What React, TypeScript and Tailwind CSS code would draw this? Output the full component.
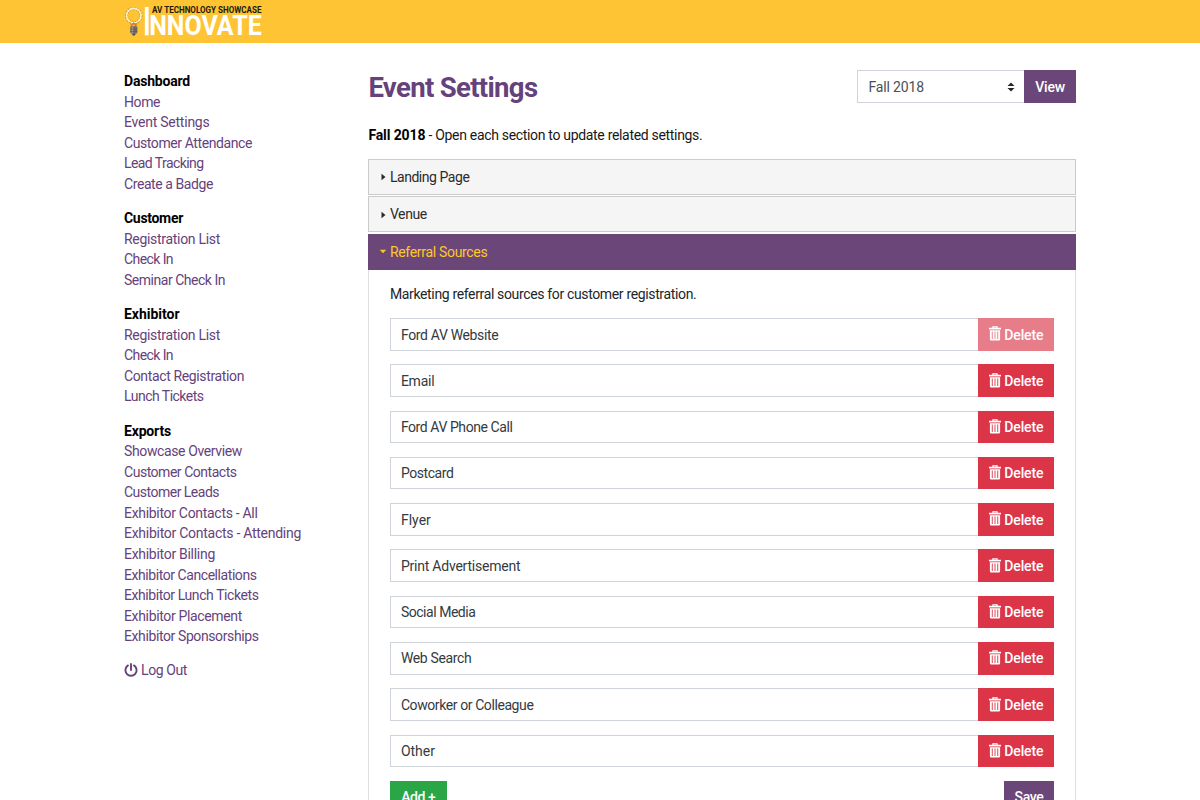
import { useLayoutEffect, useRef } from 'react';

type TextProps = { text: string; width: number; className?: string };

/** Single-line text whose tracking is adjusted so that it fills `width` pixels. */
function Text({ text, width, className = '' }: TextProps) {
  const ref = useRef<HTMLSpanElement>(null);
  useLayoutEffect(() => {
    const el = ref.current;
    if (!el) return;
    el.style.letterSpacing = '0px';
    const natural = el.getBoundingClientRect().width;
    el.style.letterSpacing = `${(width - natural) / text.length}px`;
  }, [text, width]);
  return (
    <span ref={ref} className={`inline-block whitespace-pre ${className}`}>
      {text}
    </span>
  );
}

const menu: { title: [string, number]; items: [string, number][] }[] = [
  {
    title: ['Dashboard', 66],
    items: [['Home', 36], ['Event Settings', 85.5], ['Customer Attendance', 128], ['Lead Tracking', 79.5], ['Create a Badge', 89]],
  },
  {
    title: ['Customer', 59],
    items: [['Registration List', 96], ['Check In', 49], ['Seminar Check In', 101]],
  },
  {
    title: ['Exhibitor', 55.5],
    items: [['Registration List', 96], ['Check In', 49], ['Contact Registration', 120], ['Lunch Tickets', 79.5]],
  },
  {
    title: ['Exports', 47],
    items: [
      ['Showcase Overview', 118],
      ['Customer Contacts', 112.5],
      ['Customer Leads', 95],
      ['Exhibitor Contacts - All', 133.5],
      ['Exhibitor Contacts - Attending', 177],
      ['Exhibitor Billing', 91],
      ['Exhibitor Cancellations', 132.5],
      ['Exhibitor Lunch Tickets', 134.5],
      ['Exhibitor Placement', 118],
      ['Exhibitor Sponsorships', 134.5],
    ],
  },
];

const sources: [string, number][] = [
  ['Ford AV Website', 97.5],
  ['Email', 33.5],
  ['Ford AV Phone Call', 111.5],
  ['Postcard', 52.5],
  ['Flyer', 30],
  ['Print Advertisement', 119.5],
  ['Social Media', 74.5],
  ['Web Search', 70.5],
  ['Coworker or Colleague', 132.5],
  ['Other', 34],
];

function Logo() {
  return (
    <svg width="140" height="42" viewBox="0 0 140 42" className="block" fontFamily="Roboto, sans-serif">
      <circle cx="9.8" cy="15.6" r="7.2" fill="none" stroke="#b98b2c" strokeWidth="2.8" strokeDasharray="1.6 1.2" />
      <circle cx="9.8" cy="15.6" r="7.2" fill="none" stroke="#fff3cf" strokeWidth="1.6" />
      <path d="M6.3 22.3 7.6 27h4.4l1.3-4.7" fill="none" stroke="#c99a38" strokeWidth="1" />
      <path d="m8.4 27-.6-2.3 1.9-1.5 1.9 1.5-.6 2.3" fill="none" stroke="#e4702a" strokeWidth="1.3" />
      <rect x="6.3" y="26.3" width="7" height="7.2" rx="1" fill="#726d66" />
      <path d="M8.4 26.8v6" stroke="#aaa49a" strokeWidth="1.4" />
      <path d="M6 29h7.5M6 31.4h7.5" stroke="#575149" strokeWidth="0.6" />
      <path d="M7.8 33.5h4l-1 2H8.8z" fill="#4c4941" />
      <rect x="20.8" y="7" width="3.8" height="28.3" fill="#fff" />
      <text x="28" y="13.4" fontSize="8.2" fontWeight="700" fill="#211b10" textLength="109.5" lengthAdjust="spacingAndGlyphs">AV TECHNOLOGY SHOWCASE</text>
      <text x="25.2" y="35.3" fontSize="27" fontWeight="700" fill="#fff" textLength="112.5" lengthAdjust="spacingAndGlyphs">NNOVATE</text>
    </svg>
  );
}

function Trash() {
  return (
    <svg width="12" height="15" viewBox="0 0 12 15" className="mr-[3.5px] mb-px shrink-0" fill="none" stroke="currentColor">
      <path d="M0 2.6h12" strokeWidth="1.7" />
      <path d="M3.9 2V.9h4.2V2" strokeWidth="1.2" />
      <path
        d="M.9 4.2h10.2v9.1q0 1.2-1.2 1.2H2.1q-1.2 0-1.2-1.2zM2.8 5.6v7.3h.9V5.6zM5.55 5.6v7.3h.9V5.6zM8.3 5.6v7.3h.9V5.6z"
        fill="currentColor"
        fillRule="evenodd"
        stroke="none"
      />
    </svg>
  );
}

function Closed({ text, width }: { text: string; width: number }) {
  return (
    <div className="mb-[1.7px] flex h-9 items-center border border-[#cbcbcb] bg-[#f5f5f5] pl-[12px] text-[#2b2b2b]">
      <svg width="5" height="8" viewBox="0 0 5 8" className="mt-px mr-[3.5px]"><path d="M.5.8 4.5 4 .5 7.2z" fill="currentColor" /></svg>
      <Text text={text} width={width} className="pt-px" />
    </div>
  );
}

export default function App() {
  return (
    <div className="h-[800px] overflow-hidden bg-white font-[Roboto,sans-serif] text-[14px] leading-[20.57px] text-[#212529]">
      <header className="h-[42.5px] bg-[#ffc433] pl-[124px]">
        <Logo />
      </header>
      <div className="flex pl-[124px]">
        <nav className="w-[244.4px] shrink-0 pt-[28.6px] text-[#65427b]">
          {menu.map(({ title, items }) => (
            <section key={title[0]} className="mb-[13.7px]">
              <h2 className="h-[20.57px] font-bold text-black"><Text text={title[0]} width={title[1]} /></h2>
              <ul>
                {items.map(([name, width]) => (
                  <li key={name} className="h-[20.57px]"><a href="#"><Text text={name} width={width} /></a></li>
                ))}
              </ul>
            </section>
          ))}
          <a href="#" className="flex items-center">
            <svg width="14" height="14" viewBox="0 0 14 14" className="mr-[3px] mb-px" fill="none" stroke="currentColor" strokeWidth="1.9" strokeLinecap="round">
              <path d="M7 1v6M4 2.4a5.6 5.6 0 1 0 6 0" />
            </svg>
            <Text text="Log Out" width={46} />
          </a>
        </nav>

        <main className="w-[707.4px] shrink-0 pt-[27.5px]">
          <div className="flex h-[33px] justify-between">
            <h1 className="pt-px text-[27.5px] leading-[33px] font-bold text-[#65427b]"><Text text="Event Settings" width={169} /></h1>
            <div className="flex">
              <div className="flex w-[167.4px] items-center justify-between border border-r-0 border-[#ced4da] pr-[9.5px] pl-[10.5px] text-[#495057]">
                <Text text="Fall 2018" width={55.5} className="pt-px" />
                <svg width="8" height="10" viewBox="0 0 8 10"><path d="M.5 4 4 .6 7.5 4zM.5 6 4 9.4 7.5 6z" fill="#22272b" /></svg>
              </div>
              <button className="w-[51.5px] bg-[#6b4779] font-medium text-white"><Text text="View" width={29.5} className="pt-px" /></button>
            </div>
          </div>

          <p className="mt-[22px] text-[#171717]">
            <Text text="Fall 2018" width={57} className="font-bold text-black" />
            <Text text=" - Open each section to update related settings." width={277} />
          </p>

          <div className="mt-[13px]">
            <Closed text="Landing Page" width={79.5} />
            <Closed text="Venue" width={37} />
            <div className="flex h-9 items-center bg-[#6b4779] pl-[10.5px] text-[#ffc827]">
              <svg width="8" height="5" viewBox="0 0 8 5" className="mr-[3px]"><path d="M.8.7 4 4.2 7.2.7z" fill="currentColor" /></svg>
              <Text text="Referral Sources" width={97.5} className="pt-px" />
            </div>
            <div className="h-[560px] border border-t-0 border-[#dedede] px-[20.5px] pt-[14.5px]">
              <p className="mb-[13px]"><Text text="Marketing referral sources for customer registration." width={306.5} /></p>
              {sources.map(([name, width], i) => (
                <div key={name} className="mb-[13.7px] flex h-[32.6px]">
                  <div className="flex flex-1 items-center border border-r-0 border-[#ced4da] pl-[10px] text-[#343a40]"><Text text={name} width={width} className="pt-px" /></div>
                  <button className={`flex w-[76.5px] items-center justify-center font-medium text-white ${i === 0 ? 'bg-[#e77d89]' : 'bg-[#dc3548]'}`}>
                    <Trash />
                    <Text text="Delete" width={39} className="pt-px" />
                  </button>
                </div>
              ))}
              <div className="flex justify-between font-medium text-white">
                <button className="h-[32.6px] w-[56.7px] bg-[#2aa646]"><Text text="Add +" width={34} className="pt-px" /></button>
                <button className="h-[32.6px] w-[50.5px] bg-[#6b4779]"><Text text="Save" width={29} className="pt-px" /></button>
              </div>
            </div>
          </div>
        </main>
      </div>
    </div>
  );
}
